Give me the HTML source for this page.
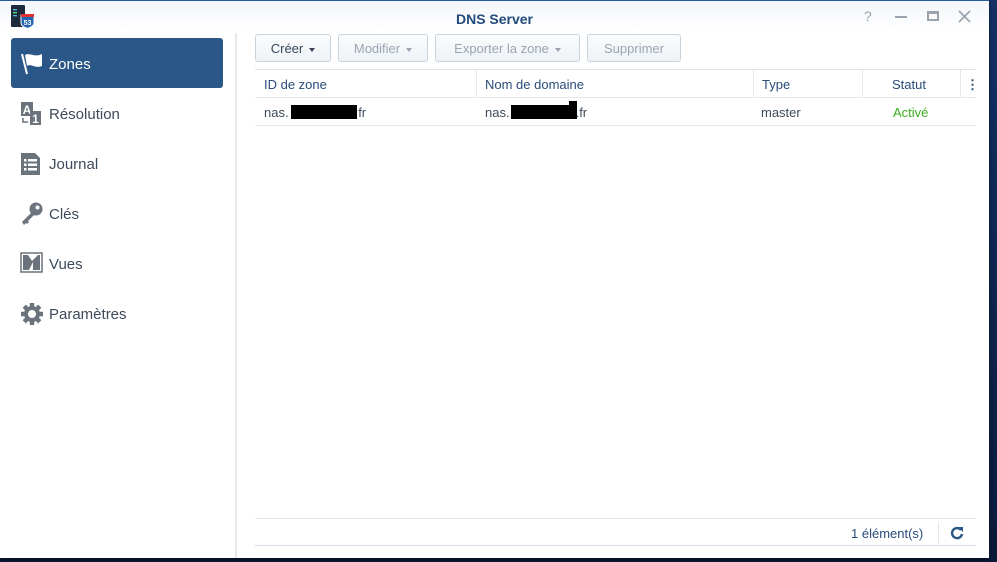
<!DOCTYPE html>
<html><head><meta charset="utf-8"><style>
*{box-sizing:border-box;margin:0;padding:0}
body{width:997px;height:562px;overflow:hidden;background:#0c1f44;font-family:"Liberation Sans",sans-serif;position:relative}
.bg{position:absolute;inset:0;background:linear-gradient(180deg,#123266,#0a1a3a)}
.win{position:absolute;left:0;top:0;width:989px;height:558px;background:#fff;box-shadow:0 2px 4px rgba(0,0,0,.5)}
.title{position:absolute;left:0;top:0;width:100%;height:33px;background:linear-gradient(#f3f6fa,#fff);border-top:1px solid #2a5a9a}
.title h1{position:absolute;left:0;right:0;text-align:center;font-size:14px;font-weight:bold;color:#234a7c}
.side{position:absolute;left:0;top:33px;width:237px;height:525px;border-right:2px solid #e8e9ea}
.item{position:absolute;left:11px;width:212px;height:50px;font-size:15px;color:#3d4a5a;display:flex;align-items:center;padding-left:38px;padding-top:2px}
.item.sel{background:#2b5688;color:#fff;border-radius:3px}
.item svg{position:absolute;left:9px;top:14px}
.btn{position:absolute;top:34px;height:28px;border:1px solid #c9d3de;border-radius:3px;background:linear-gradient(#fafcfd,#eef2f6);font-size:13px;color:#9aa5b1;text-align:center;line-height:27px}
.btn.on{color:#37475a}
.car{display:inline-block;border-left:3.5px solid transparent;border-right:3.5px solid transparent;border-top:4px solid currentColor;vertical-align:middle;margin-left:6px}
.t{position:absolute;font-size:13px;color:#2a4c78}
.d{position:absolute;font-size:13px;color:#3d4a5a}
.line{position:absolute;height:1px;background:#e4e9ef}
.vl{position:absolute;width:1px;background:#e2e8ee}
.blk{position:absolute;background:#000;height:14px}
</style></head><body>
<div class="bg"></div>
<div class="win">
 <div class="title">
  <svg style="position:absolute;left:10px;top:3px" width="25" height="25" viewBox="0 0 25 25"><rect x="1" y="1" width="14" height="22" rx="1" fill="#1e2a3c"/><rect x="3" y="5" width="4" height="1.3" fill="#5bd"/><rect x="3" y="8" width="4" height="1.3" fill="#5d8"/><rect x="3" y="11" width="4" height="1.3" fill="#5bd"/><path d="M11 11h13v8c0 3-3.5 4.5-6.5 5.5-3-1-6.5-2.5-6.5-5.5z" fill="#2466b0" stroke="#fff" stroke-width="1"/><rect x="11" y="10" width="13" height="3" fill="#d33"/><text x="17.5" y="21" font-size="7" fill="#fff" text-anchor="middle" font-family="Liberation Sans" font-weight="bold">53</text></svg>
  <h1 style="top:10px">DNS Server</h1>
  <div style="position:absolute;left:864px;top:7px;font-size:14px;color:#9aa3ad">?</div>
  <div style="position:absolute;left:895px;top:15px;width:12px;height:2px;background:#9aa3ad"></div>
  <div style="position:absolute;left:927px;top:10px;width:12px;height:10px;border:2px solid #9aa3ad;border-top-width:3px"></div>
  <svg style="position:absolute;left:958px;top:9px" width="13" height="13"><path d="M1 1L12 12M12 1L1 12" stroke="#9aa3ad" stroke-width="1.6"/></svg>
 </div>
 <div class="side">
  <div class="item sel" style="top:5px"><svg width="26" height="24" viewBox="0 0 26 24"><path d="M2 2l5 20" stroke="#fff" stroke-width="2"/><path d="M5 3c5-3 9 3 17-1v12c-7 3-11-3-15 0z" fill="#fff"/></svg>Zones</div>
  <div class="item" style="top:55px"><svg width="24" height="24" viewBox="0 0 24 24"><rect x="1" y="0" width="12" height="14" fill="#6b737c"/><text x="7" y="12" font-size="12" fill="#fff" text-anchor="middle" font-family="Liberation Sans" font-weight="bold">A</text><rect x="10" y="9" width="11" height="14" fill="#6b737c"/><text x="15.5" y="21" font-size="12" fill="#fff" text-anchor="middle" font-family="Liberation Sans" font-weight="bold">1</text><path d="M3 16v4h5" stroke="#6b737c" stroke-width="1.6" fill="none"/></svg>Résolution</div>
  <div class="item" style="top:105px"><svg width="22" height="24" viewBox="0 0 22 24"><path d="M1 1h14l5 5v17H1z" fill="#6b737c"/><g fill="#fff"><rect x="4" y="7" width="2.5" height="2.5"/><rect x="8" y="7" width="9" height="2.5"/><rect x="4" y="11.5" width="2.5" height="2.5"/><rect x="8" y="11.5" width="9" height="2.5"/><rect x="4" y="16" width="2.5" height="2.5"/><rect x="8" y="16" width="9" height="2.5"/></g></svg>Journal</div>
  <div class="item" style="top:155px"><svg width="24" height="24" viewBox="0 0 24 24"><circle cx="16" cy="7" r="6.5" fill="#6b737c"/><circle cx="17.5" cy="5.5" r="2" fill="#fff"/><path d="M12 10L2 20l2 3 2-2 1 1 2-2-1-1 6-6z" fill="#6b737c"/></svg>Clés</div>
  <div class="item" style="top:205px"><svg width="24" height="22" viewBox="0 0 24 22"><rect x="1" y="1" width="21" height="19" fill="none" stroke="#6b737c" stroke-width="1.5"/><path d="M3 3h5l4 6 6-6h2v15H13v-8L9 18H3z" fill="#6b737c"/></svg>Vues</div>
  <div class="item" style="top:255px"><svg width="24" height="24" viewBox="0 0 24 24"><circle cx="12" cy="12" r="8" fill="#6b737c"/><g stroke="#6b737c" stroke-width="4.5"><path d="M12 1v22M1 12h22M4.2 4.2l15.6 15.6M19.8 4.2L4.2 19.8"/></g><circle cx="12" cy="12" r="4" fill="#fff"/></svg>Paramètres</div>
 </div>
 <div class="btn on" style="left:255px;width:76px">Créer<span class="car"></span></div>
 <div class="btn" style="left:338px;width:90px">Modifier<span class="car"></span></div>
 <div class="btn" style="left:435px;width:145px">Exporter la zone<span class="car"></span></div>
 <div class="btn" style="left:587px;width:94px">Supprimer</div>
 <div class="line" style="left:255px;top:69px;width:721px;background:#dbe3ec"></div>
 <div class="vl" style="left:476px;top:70px;height:27px"></div>
 <div class="vl" style="left:753px;top:70px;height:27px"></div>
 <div class="vl" style="left:862px;top:70px;height:27px"></div>
 <div class="vl" style="left:960px;top:70px;height:27px"></div>
 <div class="t" style="left:264px;top:77px">ID de zone</div>
 <div class="t" style="left:485px;top:77px">Nom de domaine</div>
 <div class="t" style="left:762px;top:77px">Type</div>
 <div class="t" style="left:892px;top:77px">Statut</div>
 <div class="t" style="left:966px;top:77px;font-weight:bold">⋮</div>
 <div class="line" style="left:255px;top:97px;width:721px"></div>
 <div class="d" style="left:264px;top:105px">nas.<span style="display:inline-block;width:66px"></span>.fr</div>
 <div class="blk" style="left:291px;top:105px;width:66px"></div>
 <div class="d" style="left:485px;top:105px">nas.<span style="display:inline-block;width:66px"></span>.fr</div>
 <div class="blk" style="left:511px;top:105px;width:66px"></div>
 <div class="blk" style="left:569px;top:101px;width:8px;height:6px"></div>
 <div class="d" style="left:761px;top:105px">master</div>
 <div class="d" style="left:893px;top:105px;color:#3cae1e">Activé</div>
 <div class="line" style="left:255px;top:125px;width:721px"></div>
 <div class="line" style="left:255px;top:518px;width:721px"></div>
 <div class="t" style="left:851px;top:526px">1 élément(s)</div>
 <div class="vl" style="left:938px;top:522px;height:22px"></div>
 <svg style="position:absolute;left:950px;top:526px" width="14" height="14" viewBox="0 0 14 14"><path d="M11 4A5 5 0 1 0 12 8" fill="none" stroke="#2a5688" stroke-width="2.4"/><path d="M8 1h5v5z" fill="#2a5688"/></svg>
 <div class="line" style="left:255px;top:545px;width:721px;background:#d5dde8"></div>
</div>
</body></html>
